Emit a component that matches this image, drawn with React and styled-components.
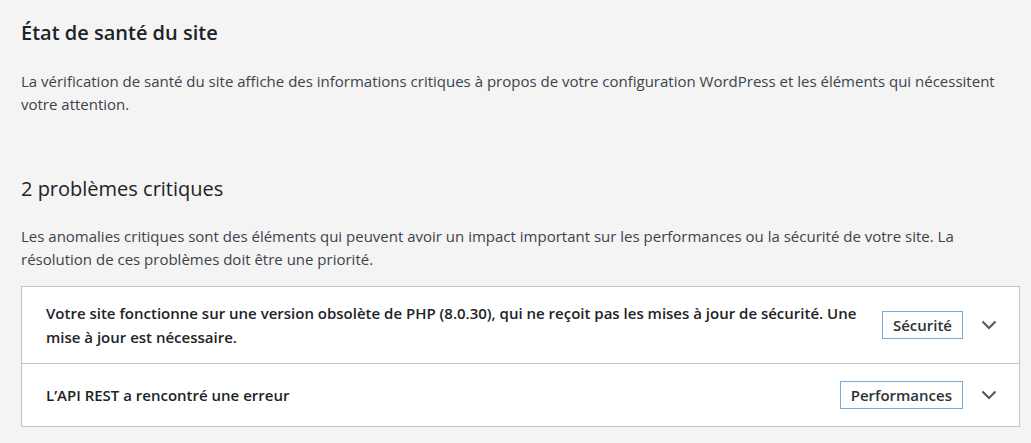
import React from 'react';
import styled, {createGlobalStyle} from 'styled-components';

const GlobalStyle = createGlobalStyle`
  html, body {
    margin: 0;
    background: #f4f4f4;
  }
  body {
    font-family: "Open Sans", "Noto Sans", sans-serif;
    color: #3c434a;
  }
`;

const Page = styled.div`
  padding: 19px 11px 16px 21px;
`;

const Title = styled.h1`
  margin: 0;
  font-size: 20px;
  line-height: 28px;
  font-weight: 600;
  color: #1d2327;
`;

const SectionTitle = styled.h2`
  margin: 59px 0 0;
  font-size: 20px;
  line-height: 28px;
  font-weight: 400;
  color: #1d2327;
`;

const Text = styled.p`
  margin: ${p => p.$top || 0}px 0 0;
  font-size: 15px;
  line-height: 23px;
`;

const Accordion = styled.div`
  margin-top: 15px;
  border: 1px solid #c3c4c7;
  background: #fff;
`;

const Row = styled.div`
  box-sizing: border-box;
  display: flex;
  align-items: center;
  min-height: 63px;
  padding: 14px 22px 14px 24px;
  & + & {
    border-top: 1px solid #c3c4c7;
  }
`;

const RowTitle = styled.div`
  flex: 1;
  font-size: 15px;
  line-height: 24px;
  font-weight: 600;
  color: #1d2327;
`;

const Badge = styled.span`
  flex: none;
  margin-left: 8px;
  height: 28px;
  box-sizing: border-box;
  padding: 0 10px;
  border: 1px solid #72aee6;
  display: flex;
  align-items: center;
  font-size: 15px;
  font-weight: 600;
  color: #2c3338;
`;

const Chevron = styled.svg`
  flex: none;
  margin-left: 18px;
  width: 16px;
  height: 10px;
`;

function Issue({title, badge}) {
  return (
    <Row>
      <RowTitle>{title}</RowTitle>
      <Badge>{badge}</Badge>
      <Chevron viewBox="0 0 16 10">
        <path d="M1.5 1.5 L8 8 L14.5 1.5" fill="none" stroke="#50575e" strokeWidth="2" />
      </Chevron>
    </Row>
  );
}

export default function App() {
  return (
    <Page>
      <GlobalStyle />
      <Title>État de santé du site</Title>
      <Text $top={23}>
        La vérification de santé du site affiche des informations critiques à propos de votre configuration WordPress et les éléments qui nécessitent votre attention.
      </Text>
      <SectionTitle>2 problèmes critiques</SectionTitle>
      <Text $top={22}>
        Les anomalies critiques sont des éléments qui peuvent avoir un impact important sur les performances ou la sécurité de votre site. La résolution de ces problèmes doit être une priorité.
      </Text>
      <Accordion>
        <Issue
          title="Votre site fonctionne sur une version obsolète de PHP (8.0.30), qui ne reçoit pas les mises à jour de sécurité. Une mise à jour est nécessaire."
          badge="Sécurité"
        />
        <Issue title="L’API REST a rencontré une erreur" badge="Performances" />
      </Accordion>
    </Page>
  );
}
